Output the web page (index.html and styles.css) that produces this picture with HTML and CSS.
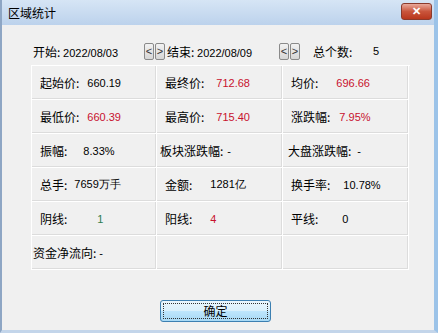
FILE: index.html
```html
<!DOCTYPE html>
<html lang="zh">
<head>
    <meta charset="UTF-8">
    <title>区域统计</title>
    <link rel="stylesheet" href="styles.css">
</head>
<body>
    <div class="window">
        <div class="titlebar">
            <span class="title">区域统计</span>
            <span class="close">&#x2715;</span>
        </div>

        <div class="content">
            <div class="range">
                <span class="start">开始: <span class="num">2022/08/03</span></span>
                <span class="arrows">
                    <span class="arrow">&lt;</span><span class="arrow">&gt;</span>
                </span>
                <span class="end">结束: <span class="num">2022/08/09</span></span>
                <span class="arrows">
                    <span class="arrow">&lt;</span><span class="arrow">&gt;</span>
                </span>
                <span class="count">总个数:</span>
                <span class="num count-val">5</span>
            </div>

            <div class="grid">
                <div class="cell"><span>起始价:</span><span class="num g8">660.19</span></div>
                <div class="cell"><span>最终价:</span><span class="num red g12">712.68</span></div>
                <div class="cell"><span>均价:</span><span class="num red g18">696.66</span></div>

                <div class="cell"><span>最低价:</span><span class="num red g8">660.39</span></div>
                <div class="cell"><span>最高价:</span><span class="num red g12">715.40</span></div>
                <div class="cell"><span>涨跌幅:</span><span class="num red g9">7.95%</span></div>

                <div class="cell"><span>振幅:</span><span class="num g16">8.33%</span></div>
                <div class="cell tight"><span>板块涨跌幅:</span><span class="num g4">-</span></div>
                <div class="cell tight2"><span>大盘涨跌幅:</span><span class="num g6">-</span></div>

                <div class="cell"><span>总手:</span><span class="num g7">7659万手</span></div>
                <div class="cell"><span>金额:</span><span class="num g18">1281亿</span></div>
                <div class="cell"><span>换手率:</span><span class="num g13">10.78%</span></div>

                <div class="cell"><span>阴线:</span><span class="num green g30">1</span></div>
                <div class="cell"><span>阳线:</span><span class="num red g18">4</span></div>
                <div class="cell"><span>平线:</span><span class="num g24">0</span></div>

                <div class="cell flush"><span>资金净流向:</span><span class="num g3">-</span></div>
                <div class="cell"></div>
                <div class="cell"></div>
            </div>

            <div class="footer">
                <button class="ok"><span class="ok-inner">确定</span></button>
            </div>
        </div>
    </div>
</body>
</html>
```

FILE: styles.css
```css
body {
    margin: 0;
    padding: 0;
    font-family: "Liberation Sans", "Noto Sans CJK SC", sans-serif;
    font-size: 12px;
    color: #000;
    background-color: #f0f0f0;
}

.window {
    width: 438px;
    height: 333px;
    box-sizing: border-box;
    border-left: 2px solid #8ea6c4;
    border-right: 4px solid #9cc3e8;
    border-bottom: 3px solid #c3d5ea;
    background-color: #f0f0f0;
    display: flex;
    flex-direction: column;
}

.titlebar {
    height: 25px;
    flex-shrink: 0;
    display: flex;
    align-items: center;
    justify-content: space-between;
    padding: 0 2px 0 6px;
    background: linear-gradient(#d6e5f5, #bcd2ec);
}

.title {
    font-family: "Noto Sans CJK SC", sans-serif;
    font-size: 12px;
    color: #000;
}

.close {
    width: 31px;
    height: 17px;
    margin-top: -2px;
    box-sizing: border-box;
    border: 1px solid #8a3a2c;
    border-radius: 3px;
    background: linear-gradient(#e9a99b, #c9553c 50%, #b9371d);
    color: #fff;
    font-weight: bold;
    font-size: 11px;
    text-align: center;
    line-height: 15px;
}

.content {
    flex: 1;
    padding: 0 0 0 29px;
    display: flex;
    flex-direction: column;
}

.range {
    display: flex;
    align-items: center;
    height: 22px;
    margin-top: 15px;
    margin-bottom: 3px;
    padding-left: 2px;
    font-family: "Noto Sans CJK SC", sans-serif;
}

.num {
    font-family: "Liberation Sans", sans-serif;
    font-size: 11px;
}

.start {
    width: 111px;
}

.end {
    width: 112px;
}

.arrows {
    display: flex;
    gap: 1px;
    margin-right: 2px;
}

.arrow {
    width: 10px;
    height: 17px;
    box-sizing: border-box;
    border: 1px solid #8a8a8a;
    border-radius: 2px;
    background: linear-gradient(#f2f2f2, #d6d6d6);
    font-family: "Liberation Sans", sans-serif;
    font-size: 11px;
    line-height: 15px;
    text-align: center;
    color: #333;
}

.count {
    margin-left: 11px;
    width: 60px;
}

.grid {
    display: grid;
    grid-template-columns: 125px 126px 126px;
    grid-auto-rows: 34px;
    width: 378px;
    border-top: 1px solid #fff;
    border-left: 1px solid #fff;
}

.cell {
    display: flex;
    align-items: center;
    padding-left: 8px;
    border-right: 1px solid #fff;
    border-bottom: 1px solid #fff;
    box-shadow: inset -1px -1px 0 #dcdcdc;
    font-family: "Noto Sans CJK SC", sans-serif;
    white-space: nowrap;
}

.cell.tight {
    padding-left: 3px;
}

.cell.tight2 {
    padding-left: 5px;
}

.cell.flush {
    padding-left: 1px;
}

.red {
    color: #c8102e;
}

.green {
    color: #2e7d4f;
}

.g3 { margin-left: 3px; }
.g4 { margin-left: 4px; }
.g6 { margin-left: 6px; }
.g7 { margin-left: 7px; }
.g8 { margin-left: 8px; }
.g9 { margin-left: 9px; }
.g12 { margin-left: 12px; }
.g13 { margin-left: 13px; }
.g16 { margin-left: 16px; }
.g18 { margin-left: 18px; }
.g24 { margin-left: 24px; }
.g30 { margin-left: 30px; }

.footer {
    display: flex;
    padding-left: 129px;
    margin-top: 30px;
}

.ok {
    width: 111px;
    height: 22px;
    padding: 2px;
    border: 1px solid #3c7fb1;
    border-radius: 3px;
    background: linear-gradient(#eaf6fd, #d9f0fc 50%, #bee6fd 51%, #a7d9f5);
    cursor: pointer;
}

.ok-inner {
    display: block;
    height: 100%;
    box-sizing: border-box;
    border: 1px dotted #333;
    font-family: "Noto Sans CJK SC", sans-serif;
    font-size: 12px;
    line-height: 14px;
    color: #000;
}
```
